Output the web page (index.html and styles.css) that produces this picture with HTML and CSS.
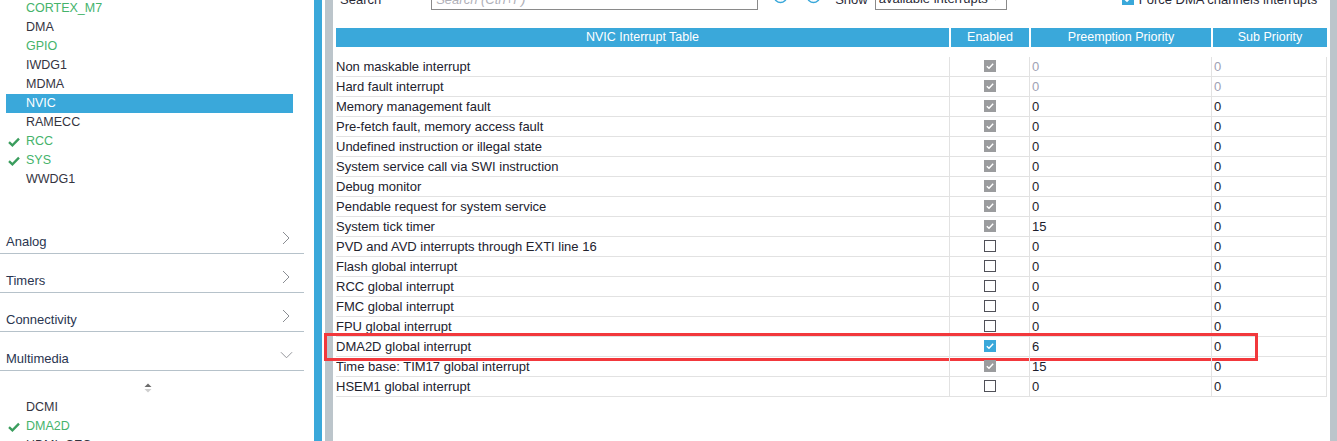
FILE: index.html
```html
<!DOCTYPE html>
<html>
<head>
<meta charset="utf-8">
<link rel="stylesheet" href="styles.css">
</head>
<body>
<div class="app">
  <aside class="sidebar">
    <ul class="periph">
      <li class="ok">CORTEX_M7</li>
      <li>DMA</li>
      <li class="ok">GPIO</li>
      <li>IWDG1</li>
      <li>MDMA</li>
      <li class="sel">NVIC</li>
      <li>RAMECC</li>
      <li class="ok"><svg class="tick" viewBox="0 0 12 10"><path d="M1 5.2 L4.4 8.4 L11 1.6"/></svg>RCC</li>
      <li class="ok"><svg class="tick" viewBox="0 0 12 10"><path d="M1 5.2 L4.4 8.4 L11 1.6"/></svg>SYS</li>
      <li>WWDG1</li>
    </ul>
    <div class="cats">
      <div class="cat"><span>Analog</span><svg class="chev" viewBox="0 0 8 14"><path d="M1 1 L7 7 L1 13"/></svg></div>
      <div class="cat"><span>Timers</span><svg class="chev" viewBox="0 0 8 14"><path d="M1 1 L7 7 L1 13"/></svg></div>
      <div class="cat"><span>Connectivity</span><svg class="chev" viewBox="0 0 8 14"><path d="M1 1 L7 7 L1 13"/></svg></div>
      <div class="cat"><span>Multimedia</span><svg class="chev down" viewBox="0 0 14 8"><path d="M1 1 L7 7 L13 1"/></svg></div>
    </div>
    <div class="sort"><svg viewBox="0 0 8 10"><path class="up" d="M0.5 4 L4 0.5 L7.5 4 Z"/><path class="dn" d="M0.5 6 L4 9.5 L7.5 6 Z"/></svg></div>
    <ul class="periph">
      <li>DCMI</li>
      <li class="ok"><svg class="tick" viewBox="0 0 12 10"><path d="M1 5.2 L4.4 8.4 L11 1.6"/></svg>DMA2D</li>
      <li>HDMI_CEC</li>
    </ul>
  </aside>
  <div class="split-blue"></div>
  <div class="split-gap"></div>
  <div class="split-gray"></div>
  <main class="main">
    <div class="toolbar">
      <span class="lbl">Search</span>
      <div class="search">Search (Ctrl+F)</div>
      <svg class="round" viewBox="0 0 16 16"><circle cx="8" cy="8" r="6.5"/><path d="M9.5 4.5 L6 8 L9.5 11.5"/></svg>
      <svg class="round r2" viewBox="0 0 16 16"><circle cx="8" cy="8" r="6.5"/><path d="M6.5 4.5 L10 8 L6.5 11.5"/></svg>
      <span class="lbl show">Show</span>
      <div class="drop"><span>available interrupts</span><svg viewBox="0 0 10 6"><path d="M1 1 L5 5 L9 1"/></svg></div>
      <span class="cb on force"><svg viewBox="0 0 12 12"><path d="M2.8 6.2 L5 8.3 L9.2 3.8"/></svg></span>
      <span class="lbl forcelbl">Force DMA channels interrupts</span>
    </div>
    <div class="table">
      <div class="thead">
        <div>NVIC Interrupt Table</div>
        <div>Enabled</div>
        <div>Preemption Priority</div>
        <div>Sub Priority</div>
      </div>
      <div class="row"><div>Non maskable interrupt</div><div class="en"><span class="cb dis"><svg viewBox="0 0 12 12"><path d="M2.8 6.2 L5 8.3 L9.2 3.8"/></svg></span></div><div class="num mute">0</div><div class="num mute">0</div></div>
      <div class="row"><div>Hard fault interrupt</div><div class="en"><span class="cb dis"><svg viewBox="0 0 12 12"><path d="M2.8 6.2 L5 8.3 L9.2 3.8"/></svg></span></div><div class="num mute">0</div><div class="num mute">0</div></div>
      <div class="row"><div>Memory management fault</div><div class="en"><span class="cb dis"><svg viewBox="0 0 12 12"><path d="M2.8 6.2 L5 8.3 L9.2 3.8"/></svg></span></div><div class="num">0</div><div class="num">0</div></div>
      <div class="row"><div>Pre-fetch fault, memory access fault</div><div class="en"><span class="cb dis"><svg viewBox="0 0 12 12"><path d="M2.8 6.2 L5 8.3 L9.2 3.8"/></svg></span></div><div class="num">0</div><div class="num">0</div></div>
      <div class="row"><div>Undefined instruction or illegal state</div><div class="en"><span class="cb dis"><svg viewBox="0 0 12 12"><path d="M2.8 6.2 L5 8.3 L9.2 3.8"/></svg></span></div><div class="num">0</div><div class="num">0</div></div>
      <div class="row"><div>System service call via SWI instruction</div><div class="en"><span class="cb dis"><svg viewBox="0 0 12 12"><path d="M2.8 6.2 L5 8.3 L9.2 3.8"/></svg></span></div><div class="num">0</div><div class="num">0</div></div>
      <div class="row"><div>Debug monitor</div><div class="en"><span class="cb dis"><svg viewBox="0 0 12 12"><path d="M2.8 6.2 L5 8.3 L9.2 3.8"/></svg></span></div><div class="num">0</div><div class="num">0</div></div>
      <div class="row"><div>Pendable request for system service</div><div class="en"><span class="cb dis"><svg viewBox="0 0 12 12"><path d="M2.8 6.2 L5 8.3 L9.2 3.8"/></svg></span></div><div class="num">0</div><div class="num">0</div></div>
      <div class="row"><div>System tick timer</div><div class="en"><span class="cb dis"><svg viewBox="0 0 12 12"><path d="M2.8 6.2 L5 8.3 L9.2 3.8"/></svg></span></div><div class="num">15</div><div class="num">0</div></div>
      <div class="row"><div>PVD and AVD interrupts through EXTI line 16</div><div class="en"><span class="cb off"></span></div><div class="num">0</div><div class="num">0</div></div>
      <div class="row"><div>Flash global interrupt</div><div class="en"><span class="cb off"></span></div><div class="num">0</div><div class="num">0</div></div>
      <div class="row"><div>RCC global interrupt</div><div class="en"><span class="cb off"></span></div><div class="num">0</div><div class="num">0</div></div>
      <div class="row"><div>FMC global interrupt</div><div class="en"><span class="cb off"></span></div><div class="num">0</div><div class="num">0</div></div>
      <div class="row"><div>FPU global interrupt</div><div class="en"><span class="cb off"></span></div><div class="num">0</div><div class="num">0</div></div>
      <div class="row hl"><div>DMA2D global interrupt</div><div class="en"><span class="cb on"><svg viewBox="0 0 12 12"><path d="M2.8 6.2 L5 8.3 L9.2 3.8"/></svg></span></div><div class="num">6</div><div class="num">0</div></div>
      <div class="row"><div>Time base: TIM17 global interrupt</div><div class="en"><span class="cb dis"><svg viewBox="0 0 12 12"><path d="M2.8 6.2 L5 8.3 L9.2 3.8"/></svg></span></div><div class="num">15</div><div class="num">0</div></div>
      <div class="row"><div>HSEM1 global interrupt</div><div class="en"><span class="cb off"></span></div><div class="num">0</div><div class="num">0</div></div>
    </div>
  </main>
  <div class="vscroll"></div>
</div>
</body>
</html>
```

FILE: styles.css
```css
*, *::before, *::after { box-sizing: border-box; }
html, body { margin: 0; padding: 0; background: #fff; }
body {
  font-family: "Liberation Sans", Arial, sans-serif;
  color: #22222e;
  overflow: hidden;
  height: 441px;
}
.app { display: flex; height: 441px; overflow: hidden; }

/* sidebar */
.sidebar { width: 314px; flex: none; padding-right: 10px; }
.periph { list-style: none; margin: 0 0 0 6px; padding: 0; width: 287px; }
.periph:first-child { margin-top: -1px; }
.periph li {
  position: relative;
  height: 19px;
  line-height: 19px;
  padding-left: 20px;
  font-size: 12.5px;
  color: #34343f;
}
.periph li.ok { color: #45b36b; }
.periph li.sel { background: #3aa8da; color: #fff; }
.tick {
  position: absolute; left: 2px; top: 5px;
  width: 12px; height: 10px;
  fill: none; stroke: #3a9d5d; stroke-width: 2.3;
}
.cats { margin-top: 26px; width: 304px; }
.cat {
  height: 39px;
  border-bottom: 1px solid #b6c2ca;
  display: flex; align-items: flex-end; justify-content: space-between;
  padding: 0 14px 3px 6px;
  font-size: 13px; color: #2a3550; line-height: 16px;
}
.chev { width: 8px; height: 14px; fill: none; stroke: #8a8d92; stroke-width: 1; margin-bottom: 5px; }
.chev.down { width: 13px; height: 8px; margin-bottom: 8px; margin-right: -3px; }
.sort { width: 304px; display: flex; justify-content: center; padding-top: 12px; height: 27px; }
.sort svg { width: 8px; height: 10px; margin-left: -8px; }
.sort .up { fill: #6b6b6b; }
.sort .dn { fill: #cfcfcf; }

/* splitters */
.split-blue { width: 8px; flex: none; background: #3aa8da; }
.split-gap { width: 3px; flex: none; background: #fff; }
.split-gray { width: 8px; flex: none; background: #bcc5cb; }
.vscroll { width: 7px; flex: none; background: #bcc5cb; margin-left: 3px; }

/* main */
.main { flex: 1; padding-left: 3px; min-width: 0; }
.toolbar {
  height: 24px; margin-top: -13px;
  display: flex; align-items: center;
  font-size: 13px;
}
.lbl { line-height: 15px; color: #2a2a36; white-space: nowrap; }
.toolbar > .lbl:first-child { margin-left: 4px; }
.search {
  margin-left: 50px; width: 327px; height: 22px;
  border: 1px solid #8a8a8a;
  font-style: italic; color: #b0b0b8; padding: 3px 4px; line-height: 15px;
}
.round { width: 15px; height: 15px; margin-left: 15px; margin-top: -6px; fill: none; stroke: #3aa8da; stroke-width: 1.6; }
.round.r2 { margin-left: 18px; }
.show { margin-left: 14px; }
.drop {
  margin-left: 7px; width: 132px; height: 23px; margin-top: -1px;
  border: 1px solid #8a8a8a;
  display: flex; align-items: center; justify-content: space-between;
  padding: 0 6px 0 3px; color: #2a2a36; line-height: 15px;
}
.drop svg { width: 8px; height: 5px; fill: none; stroke: #666; stroke-width: 1.1; }
.force { margin-left: 115px; }
.forcelbl { margin-left: 5px; }

/* checkboxes */
.cb { display: inline-block; width: 12px; height: 12px; flex: none; }
.cb svg { display: block; width: 12px; height: 12px; fill: none; stroke: #fff; stroke-width: 1.4; }
.cb.dis { background: #9b9c9e; }
.cb.on { background: #3aa8da; }
.cb.off { border: 1px solid #505058; background: #fff; }

/* table */
.table { margin-top: 17px; width: 991px; }
.thead {
  display: grid; grid-template-columns: 613px 78px 180px 114px; column-gap: 2px;
  height: 19px; margin-bottom: 10px;
}
.thead div {
  background: #3aa8da; color: #fff; text-align: center;
  font-size: 12.5px; line-height: 19px;
}
.row {
  position: relative;
  display: grid; grid-template-columns: 614px 80px 182px 115px;
  height: 20px; border-bottom: 1px solid #e2e2e2;
  font-size: 13px; line-height: 20px;
}
.row > div { border-right: 1px solid #e2e2e2; white-space: nowrap; overflow: hidden; }
.row .en { display: flex; align-items: center; justify-content: center; padding-bottom: 1px; }
.row .num { padding-left: 2px; color: #1c1c2c; }
.row .num.mute { color: #a0a2b4; }
.row.hl::after {
  content: ""; position: absolute;
  left: -12px; top: -4px; width: 934px; height: 28px;
  border: 3px solid #f2383c;
  pointer-events: none;
}
```
